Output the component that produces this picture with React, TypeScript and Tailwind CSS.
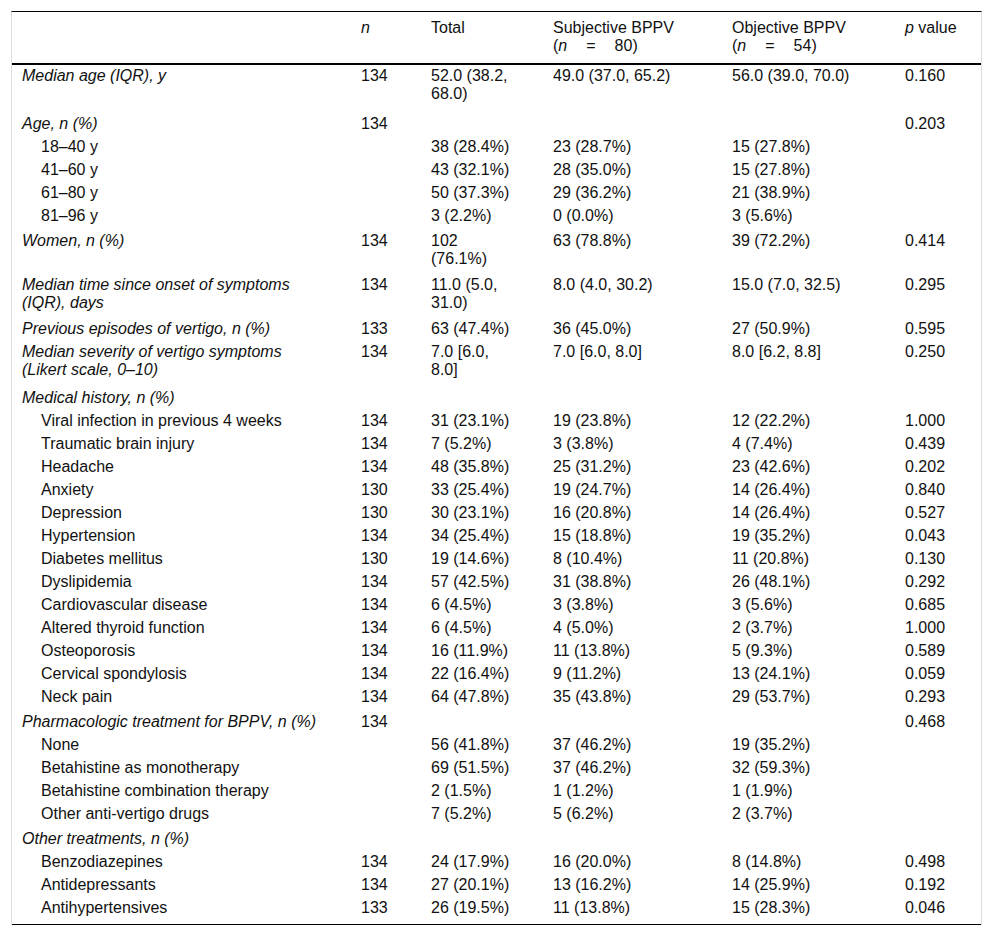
type Row = {
  label: string
  sub?: boolean
  tall?: boolean
  n?: string
  total?: string
  subj?: string
  obj?: string
  p?: string
}

const rows: Row[] = [
  { label: 'Median age (IQR), y', tall: true, n: '134', total: '52.0 (38.2, 68.0)', subj: '49.0 (37.0, 65.2)', obj: '56.0 (39.0, 70.0)', p: '0.160' },
  { label: 'Age, n (%)', n: '134', p: '0.203' },
  { label: '18–40 y', sub: true, total: '38 (28.4%)', subj: '23 (28.7%)', obj: '15 (27.8%)' },
  { label: '41–60 y', sub: true, total: '43 (32.1%)', subj: '28 (35.0%)', obj: '15 (27.8%)' },
  { label: '61–80 y', sub: true, total: '50 (37.3%)', subj: '29 (36.2%)', obj: '21 (38.9%)' },
  { label: '81–96 y', sub: true, total: '3 (2.2%)', subj: '0 (0.0%)', obj: '3 (5.6%)' },
  { label: 'Women, n (%)', tall: true, n: '134', total: '102 (76.1%)', subj: '63 (78.8%)', obj: '39 (72.2%)', p: '0.414' },
  { label: 'Median time since onset of symptoms (IQR), days', tall: true, n: '134', total: '11.0 (5.0, 31.0)', subj: '8.0 (4.0, 30.2)', obj: '15.0 (7.0, 32.5)', p: '0.295' },
  { label: 'Previous episodes of vertigo, n (%)', n: '133', total: '63 (47.4%)', subj: '36 (45.0%)', obj: '27 (50.9%)', p: '0.595' },
  { label: 'Median severity of vertigo symptoms (Likert scale, 0–10)', tall: true, n: '134', total: '7.0 [6.0, 8.0]', subj: '7.0 [6.0, 8.0]', obj: '8.0 [6.2, 8.8]', p: '0.250' },
  { label: 'Medical history, n (%)' },
  { label: 'Viral infection in previous 4 weeks', sub: true, n: '134', total: '31 (23.1%)', subj: '19 (23.8%)', obj: '12 (22.2%)', p: '1.000' },
  { label: 'Traumatic brain injury', sub: true, n: '134', total: '7 (5.2%)', subj: '3 (3.8%)', obj: '4 (7.4%)', p: '0.439' },
  { label: 'Headache', sub: true, n: '134', total: '48 (35.8%)', subj: '25 (31.2%)', obj: '23 (42.6%)', p: '0.202' },
  { label: 'Anxiety', sub: true, n: '130', total: '33 (25.4%)', subj: '19 (24.7%)', obj: '14 (26.4%)', p: '0.840' },
  { label: 'Depression', sub: true, n: '130', total: '30 (23.1%)', subj: '16 (20.8%)', obj: '14 (26.4%)', p: '0.527' },
  { label: 'Hypertension', sub: true, n: '134', total: '34 (25.4%)', subj: '15 (18.8%)', obj: '19 (35.2%)', p: '0.043' },
  { label: 'Diabetes mellitus', sub: true, n: '130', total: '19 (14.6%)', subj: '8 (10.4%)', obj: '11 (20.8%)', p: '0.130' },
  { label: 'Dyslipidemia', sub: true, n: '134', total: '57 (42.5%)', subj: '31 (38.8%)', obj: '26 (48.1%)', p: '0.292' },
  { label: 'Cardiovascular disease', sub: true, n: '134', total: '6 (4.5%)', subj: '3 (3.8%)', obj: '3 (5.6%)', p: '0.685' },
  { label: 'Altered thyroid function', sub: true, n: '134', total: '6 (4.5%)', subj: '4 (5.0%)', obj: '2 (3.7%)', p: '1.000' },
  { label: 'Osteoporosis', sub: true, n: '134', total: '16 (11.9%)', subj: '11 (13.8%)', obj: '5 (9.3%)', p: '0.589' },
  { label: 'Cervical spondylosis', sub: true, n: '134', total: '22 (16.4%)', subj: '9 (11.2%)', obj: '13 (24.1%)', p: '0.059' },
  { label: 'Neck pain', sub: true, n: '134', total: '64 (47.8%)', subj: '35 (43.8%)', obj: '29 (53.7%)', p: '0.293' },
  { label: 'Pharmacologic treatment for BPPV, n (%)', n: '134', p: '0.468' },
  { label: 'None', sub: true, total: '56 (41.8%)', subj: '37 (46.2%)', obj: '19 (35.2%)' },
  { label: 'Betahistine as monotherapy', sub: true, total: '69 (51.5%)', subj: '37 (46.2%)', obj: '32 (59.3%)' },
  { label: 'Betahistine combination therapy', sub: true, total: '2 (1.5%)', subj: '1 (1.2%)', obj: '1 (1.9%)' },
  { label: 'Other anti-vertigo drugs', sub: true, total: '7 (5.2%)', subj: '5 (6.2%)', obj: '2 (3.7%)' },
  { label: 'Other treatments, n (%)' },
  { label: 'Benzodiazepines', sub: true, n: '134', total: '24 (17.9%)', subj: '16 (20.0%)', obj: '8 (14.8%)', p: '0.498' },
  { label: 'Antidepressants', sub: true, n: '134', total: '27 (20.1%)', subj: '13 (16.2%)', obj: '14 (25.9%)', p: '0.192' },
  { label: 'Antihypertensives', sub: true, n: '133', total: '26 (19.5%)', subj: '11 (13.8%)', obj: '15 (28.3%)', p: '0.046' },
]

// section headings get a bit more room above them
const sections = ['Age, n (%)', 'Women, n (%)', 'Medical history, n (%)', 'Pharmacologic treatment for BPPV, n (%)', 'Other treatments, n (%)']

const grid = 'grid grid-cols-[339px_70px_122px_179px_173px_86px]'

function rowPad(r: Row, i: number) {
  if (i === 0) return 'pt-[2px] pb-[6px]'
  const pt = sections.includes(r.label) ? 'pt-[6px]' : 'pt-[4px]'
  const pb = r.tall ? 'pb-[4px]' : 'pb-px'
  return `${pt} ${pb}`
}

function GroupN({ value }: { value: string }) {
  return (
    <span className="whitespace-nowrap">
      (<i>n</i>
      <span className="inline-block w-[19px]" />=<span className="inline-block w-[19px]" />
      {value})
    </span>
  )
}

export default function App() {
  return (
    <div
      className="min-h-[936px] bg-white pl-[11px] pt-[11px] text-[16px] leading-[18px] text-[#111]"
      style={{ fontFamily: '"Liberation Sans", Arial, sans-serif' }}
    >
      <div className="w-[971px] border-x border-t border-x-[#dedede] border-t-black">
        {/* header */}
        <div className={`${grid} border-b-2 border-black pt-[7px] pb-[8px]`}>
          <div className="pl-[10px]" />
          <div className="pl-[10px] italic">n</div>
          <div className="pl-[10px]">Total</div>
          <div className="pl-[10px]">
            Subjective BPPV
            <br />
            <GroupN value="80" />
          </div>
          <div className="pl-[10px]">
            Objective BPPV
            <br />
            <GroupN value="54" />
          </div>
          <div className="pl-[10px]">
            <i>p</i> value
          </div>
        </div>

        {/* body */}
        <div className="border-b border-black pb-[6px]">
          {rows.map((r, i) => (
            <div key={r.label} className={`${grid} ${rowPad(r, i)}`}>
              <div className={`pl-[10px] pr-[27px] ${r.sub ? '' : 'italic'}`}>
                <div className={r.sub ? 'pl-[19px]' : ''}>{r.label}</div>
              </div>
              <div className="pl-[10px]">{r.n}</div>
              <div className="pl-[10px]">
                <div className="w-[82px]">{r.total}</div>
              </div>
              <div className="pl-[10px]">{r.subj}</div>
              <div className="pl-[10px]">{r.obj}</div>
              <div className="pl-[10px]">{r.p}</div>
            </div>
          ))}
        </div>
      </div>
    </div>
  )
}
